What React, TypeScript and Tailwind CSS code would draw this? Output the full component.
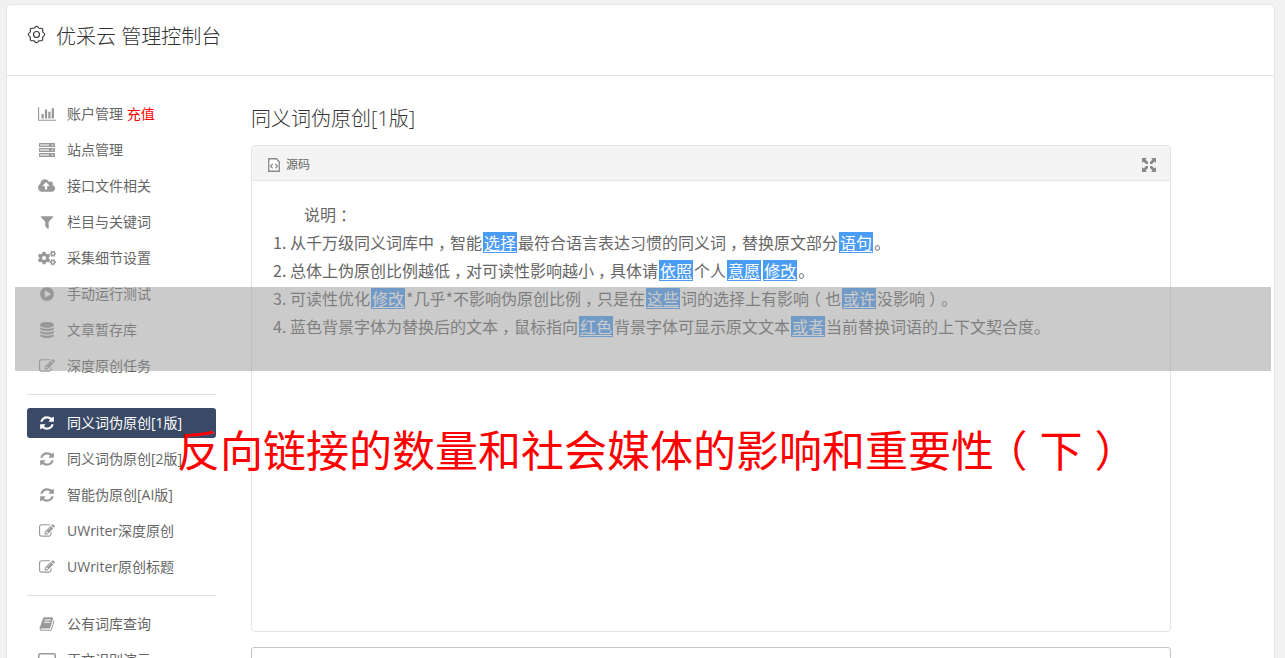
import React from 'react';
import { FaCogs } from 'react-icons/fa';

interface Glyph {
  box: string;
  d: string;
}

interface NavItem {
  label: string;
  icon: React.ReactNode;
  note?: string;
  active?: boolean;
}

const glyphs: Record<string, Glyph> = {
  chart: {
    box: "0 0 2048 1792",
    d: "M640 896v512h-256v-512h256zm384-512v1024h-256v-1024h256zm1024 1152v128h-2048v-1536h128v1408h1920zm-640-896v768h-256v-768h256zm384-384v1152h-256v-1152h256z"
  },
  cloud: {
    box: "0 0 1920 1792",
    d: "M1280 864q0-14-9-23l-352-352q-9-9-23-9t-23 9l-351 351q-10 12-10 24 0 14 9 23t23 9h224v352q0 13 9.5 22.5t22.5 9.5h192q13 0 22.5-9.5t9.5-22.5v-352h224q13 0 22.5-9.5t9.5-22.5zm640 288q0 159-112.5 271.5t-271.5 112.5h-1088q-185 0-316.5-131.5t-131.5-316.5q0-130 70-240t188-165q-2-30-2-43 0-212 150-362t362-150q156 0 285.5 87t188.5 231q71-62 166-62 106 0 181 75t75 181q0 76-41 138 130 31 213.5 135.5t83.5 238.5z"
  },
  filter: {
    box: "0 0 1792 1792",
    d: "M1595 295q17 41-14 70l-493 493v742q0 42-39 59-13 5-25 5-27 0-45-19l-256-256q-19-19-19-45v-486l-493-493q-31-29-14-70 17-39 59-39h1280q42 0 59 39z"
  },
  play: {
    box: "0 0 1792 1792",
    d: "M896 128q209 0 385.5 103t279.5 279.5 103 385.5-103 385.5-279.5 279.5-385.5 103-385.5-103-279.5-279.5-103-385.5 103-385.5 279.5-279.5 385.5-103zm384 823q32-18 32-55t-32-55l-544-320q-31-19-64-1-32 19-32 56v640q0 37 32 56 16 8 32 8 17 0 32-9z"
  },
  database: {
    box: "0 0 1792 1792",
    d: "M896 768q237 0 443-43t325-127v170q0 69-103 128t-280 93.5-385 34.5-385-34.5-280-93.5-103-128v-170q119 84 325 127t443 43zm0 768q237 0 443-43t325-127v170q0 69-103 128t-280 93.5-385 34.5-385-34.5-280-93.5-103-128v-170q119 84 325 127t443 43zm0-384q237 0 443-43t325-127v170q0 69-103 128t-280 93.5-385 34.5-385-34.5-280-93.5-103-128v-170q119 84 325 127t443 43zm0-1152q208 0 385 34.5t280 93.5 103 128v128q0 69-103 128t-280 93.5-385 34.5-385-34.5-280-93.5-103-128v-128q0-69 103-128t280-93.5 385-34.5z"
  },
  edit: {
    box: "0 0 1792 1792",
    d: "M888 1184l116-116-152-152-116 116v56h96v96h56zm440-720q-16-16-33 1l-350 350q-17 17-1 33t33-1l350-350q17-17 1-33zm80 594v190q0 119-84.5 203.5t-203.5 84.5h-832q-119 0-203.5-84.5t-84.5-203.5v-832q0-119 84.5-203.5t203.5-84.5h832q63 0 117 25 15 7 18 23 3 17-9 29l-49 49q-14 14-32 8-23-6-45-6h-832q-66 0-113 47t-47 113v832q0 66 47 113t113 47h832q66 0 113-47t47-113v-126q0-13 9-22l64-64q15-15 35-7t20 29zm-96-738l288 288-672 672h-288v-288zm444 132l-92 92-288-288 92-92q28-28 68-28t68 28l152 152q28 28 28 68t-28 68z"
  },
  refresh: {
    box: "0 0 1792 1792",
    d: "M1639 1056q0 5-1 7-64 268-268 434.5t-478 166.5q-146 0-282.5-55t-243.5-157l-129 129q-19 19-45 19t-45-19-19-45v-448q0-26 19-45t45-19h448q26 0 45 19t19 45-19 45l-137 137q71 66 161 102t187 36q134 0 250-65t186-179q11-17 53-117 8-23 30-23h192q13 0 22.5 9.5t9.5 22.5zm25-800v448q0 26-19 45t-45 19h-448q-26 0-45-19t-19-45 19-45l138-138q-148-137-349-137-134 0-250 65t-186 179q-11 17-53 117-8 23-30 23h-199q-13 0-22.5-9.5t-9.5-22.5v-7q65-268 270-434.5t480-166.5q146 0 284 55.5t245 156.5l130-129q19-19 45-19t45 19 19 45z"
  },
  book: {
    box: "0 0 1792 1792",
    d: "M1703 478q40 57 18 129l-275 906q-19 64-76.5 107.5t-122.5 43.5h-923q-77 0-148.5-53.5t-99.5-131.5q-24-67-2-127 0-4 3-27t4-37q1-8-3-21.5t-3-19.5q2-11 8-21t16.5-23.5 16.5-23.5q23-38 45-91.5t30-91.5q3-10 .5-30t-.5-28q3-11 17-28t17-23q21-36 42-92t25-90q1-9-2.5-32t.5-28q4-13 22-30.5t22-22.5q19-26 42.5-84.5t27.5-96.5q1-8-3-25.5t-2-26.5q2-8 9-18t18-23 17-21q8-12 16.5-30.5t15-35 16-36 19.5-32 26.5-23.5 36-11.5 47.5 5.5l-1 3q38-9 51-9h761q74 0 114 56t18 130l-274 906q-36 119-71.5 153.5t-128.5 34.5h-869q-27 0-38 15-11 16-1 43 24 70 144 70h923q29 0 56-15.5t35-41.5l300-987q7-22 5-57 38 15 59 43zm-1064 2q-4 13 2 22.5t20 9.5h608q13 0 25.5-9.5t16.5-22.5l21-64q4-13-2-22.5t-20-9.5h-608q-13 0-25.5 9.5t-16.5 22.5zm-83 256q-4 13 2 22.5t20 9.5h608q13 0 25.5-9.5t16.5-22.5l21-64q4-13-2-22.5t-20-9.5h-608q-13 0-25.5 9.5t-16.5 22.5z"
  }
};

const Icon = ({ name }: { name: string }) => (
  <svg viewBox={glyphs[name].box} className="h-4 w-auto" fill="currentColor" aria-hidden="true">
    <path d={glyphs[name].d} />
  </svg>
);

// Outline of the header gear: a circle with eight soft teeth
const gearOutline = Array.from({ length: 96 }, (_, step) => {
  const angle = (step / 96) * Math.PI * 2;
  const radius = 7.5 + 0.7 * Math.cos(angle * 8);
  return `${(9.5 + radius * Math.cos(angle)).toFixed(2)},${(9.5 + radius * Math.sin(angle)).toFixed(2)}`;
}).join(" ");

const GearIcon = () => (
  <svg viewBox="0 0 19 19" className="mt-1 size-[19px]" fill="none" stroke="currentColor" strokeWidth="1.1" aria-hidden="true">
    <polygon points={gearOutline} />
    <circle cx="9.5" cy="9.5" r="3" />
  </svg>
);

const ServerIcon = () => (
  <svg viewBox="0 0 16 14" className="h-[14px] w-4" aria-hidden="true">
    {[0, 5, 10].map((y) => (
      <g key={y}>
        <rect x="0" y={y} width="16" height="4" rx="0.5" fill="currentColor" />
        <rect x="1" y={y + 1} width="9" height="2" fill="#d0d0d0" />
        <circle cx="13.5" cy={y + 2} r="0.8" fill="#fff" />
      </g>
    ))}
  </svg>
);

const LaptopIcon = () => (
  <svg viewBox="0 0 18 14" className="h-[14px] w-[18px]" fill="none" stroke="currentColor" aria-hidden="true">
    <rect x="0.75" y="0.75" width="16.5" height="11" rx="1.5" strokeWidth="1.5" />
    <path d="M5 13.5h8" />
  </svg>
);

const SourceIcon = () => (
  <svg viewBox="0 0 12 14" className="h-[14px] w-3" fill="none" stroke="#888" aria-hidden="true">
    <path d="M0.75 0.75h7.5l3 3v9.5h-10.5z" strokeWidth="1.3" fill="#fff" />
    <path d="M4.6 6l-2 2.2 2 2.2M7.4 6l2 2.2-2 2.2" strokeWidth="1.2" />
  </svg>
);

const ExpandIcon = () => (
  <svg viewBox="0 0 14 14" className="size-[14px]" fill="#888" aria-hidden="true">
    {[0, 90, 180, 270].map((angle) => (
      <path key={angle} d="M0 0h5l-1.5 1.5 2.5 2.5v2h-2l-2.5-2.5-1.5 1.5z" transform={`rotate(${angle} 7 7)`} />
    ))}
  </svg>
);

const groups: NavItem[][] = [
  [
    { label: "账户管理", icon: <Icon name="chart" />, note: "充值" },
    { label: "站点管理", icon: <ServerIcon /> },
    { label: "接口文件相关", icon: <Icon name="cloud" /> },
    { label: "栏目与关键词", icon: <Icon name="filter" /> },
    { label: "采集细节设置", icon: <FaCogs size={18} /> },
    { label: "手动运行测试", icon: <Icon name="play" /> },
    { label: "文章暂存库", icon: <Icon name="database" /> },
    { label: "深度原创任务", icon: <Icon name="edit" /> }
  ],
  [
    { label: "同义词伪原创[1版]", icon: <Icon name="refresh" />, active: true },
    { label: "同义词伪原创[2版]", icon: <Icon name="refresh" /> },
    { label: "智能伪原创[AI版]", icon: <Icon name="refresh" /> },
    { label: "UWriter深度原创", icon: <Icon name="edit" /> },
    { label: "UWriter原创标题", icon: <Icon name="edit" /> }
  ],
  [
    { label: "公有词库查询", icon: <Icon name="book" /> },
    { label: "正文识别演示", icon: <LaptopIcon /> }
  ]
];

const NavLink = ({ item }: { item: NavItem }) => (
  <a
    href="#"
    className={
      item.active
        ? "flex h-[30px] items-center rounded-[3px] bg-[#3a4a66] text-white"
        : "flex h-[30px] items-center text-[#666]"
    }
  >
    <span className={item.active ? "flex w-10 justify-center" : "flex w-10 justify-center text-[#999]"}>
      {item.icon}
    </span>
    <span className="whitespace-nowrap">
      {item.label}
      {item.note && <span className="text-[#f00]"> {item.note}</span>}
    </span>
  </a>
);

// Replaced word inside the rewritten text
const Swap = ({ children }: { children: React.ReactNode }) => (
  <u className="mx-px inline-block h-[21px] bg-[#4b9cf5] px-px leading-[21px] text-white underline-offset-2">
    {children}
  </u>
);

// Punctuation centred in its full-width cell
const Mid = ({ children }: { children: React.ReactNode }) => (
  <span className="px-1 [font-feature-settings:'halt']">{children}</span>
);

export default function App() {
  return (
    <div className="relative h-screen overflow-hidden bg-[#f1f1f1] pt-1 pr-[10px] pl-[6px] text-sm text-[#666] [font-family:'Open_Sans','Noto_Sans_CJK_SC',sans-serif]">
      <div className="min-h-screen rounded-[5px] border border-[#e4e4e4] bg-white">
        <header className="flex h-[71px] items-start gap-[10px] border-b border-[#e4e4e4] px-5 pt-4 text-[#333]">
          <GearIcon />
          <h1 className="text-xl leading-8 font-light">优采云 管理控制台</h1>
        </header>

        <div className="flex gap-[35px] pt-[23px] pl-5">
          <nav className="w-[189px] shrink-0">
            {groups.map((group, index) => (
              <div
                key={index}
                className={index === 0 ? "grid gap-[6px]" : "mt-[13px] grid gap-[6px] border-t border-[#ddd] pt-[13px]"}
              >
                {group.map((item) => (
                  <NavLink key={item.label} item={item} />
                ))}
              </div>
            ))}
          </nav>

          <main className="mr-[103px] min-w-0 flex-1 pt-1">
            <h2 className="mb-[10px] text-xl leading-8 font-light text-[#333]">同义词伪原创[1版]</h2>

            <section className="min-h-[487px] rounded-[4px] border border-[#e4e4e4]">
              <div className="flex h-[35px] items-center justify-between rounded-t-[3px] border-b border-[#e4e4e4] bg-[#f4f4f4] pt-[3px] pr-[14px] pl-4">
                <button type="button" className="flex items-center gap-[6px] text-xs">
                  <SourceIcon />
                  源码
                </button>
                <button type="button" aria-label="全屏">
                  <ExpandIcon />
                </button>
              </div>
              <div className="px-5 pt-[19px] text-base leading-7 [font-family:'Noto_Sans_CJK_SC',sans-serif]">
                <p className="indent-8">说明<Mid>：</Mid></p>
                <ol className="list-decimal pl-[18px]">
                  <li className="h-7">
                    从千万级同义词库中<Mid>，</Mid>智能<Swap>选择</Swap>最符合语言表达习惯的同义词<Mid>，</Mid>替换原文部分<Swap>语句</Swap>。
                  </li>
                  <li className="h-7">
                    总体上伪原创比例越低<Mid>，</Mid>对可读性影响越小<Mid>，</Mid>具体请<Swap>依照</Swap>个人<Swap>意愿</Swap><Swap>修改</Swap>。
                  </li>
                  <li className="h-7">
                    可读性优化<Swap>修改</Swap>*几乎*不影响伪原创比例<Mid>，</Mid>只是在<Swap>这些</Swap>词的选择上有影响<Mid>（</Mid>也<Swap>或许</Swap>没影响<Mid>）</Mid>。
                  </li>
                  <li className="h-7">
                    蓝色背景字体为替换后的文本<Mid>，</Mid>鼠标指向<Swap>红色</Swap>背景字体可显示原文文本<Swap>或者</Swap>当前替换词语的上下文契合度。
                  </li>
                </ol>
              </div>
            </section>

            <section className="mt-[15px] min-h-20 rounded-[3px] border border-[#c4c4c4]" />
          </main>
        </div>
      </div>

      {/* Translucent band and caption laid over the page */}
      <div className="absolute top-[287px] right-[14px] left-[15px] h-[84px] bg-[#979797]/50" />
      <p className="absolute top-[421px] left-[177px] text-[43px] leading-[60px] whitespace-nowrap text-[#f00]">
        反向链接的数量和社会媒体的影响和重要性
        <span className="px-3 [font-feature-settings:'halt']">（</span>下
        <span className="px-3 [font-feature-settings:'halt']">）</span>
      </p>
    </div>
  );
}
